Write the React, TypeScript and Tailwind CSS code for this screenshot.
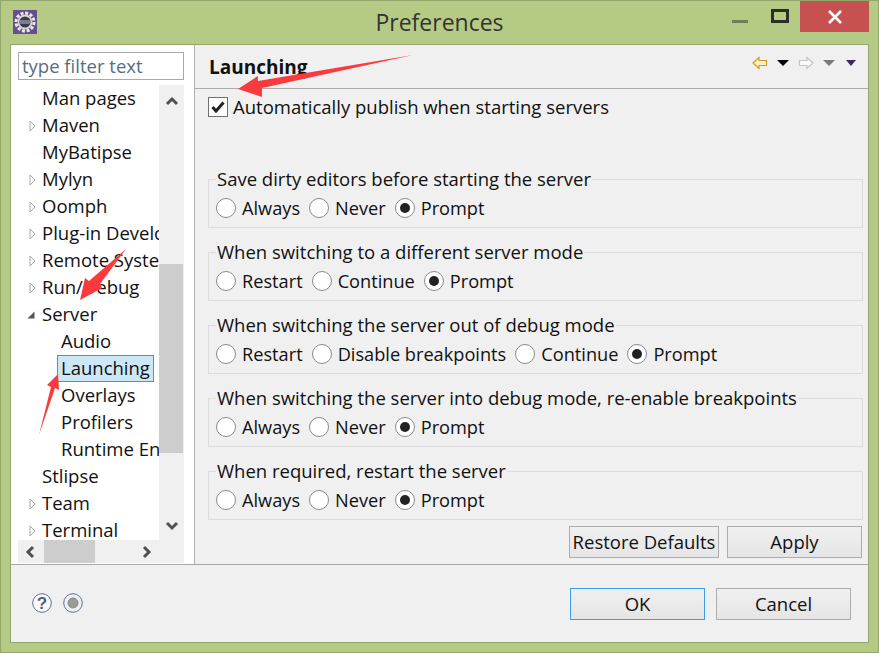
import React from "react";

const font = { fontFamily: '"Open Sans", "Noto Sans", sans-serif' };

type Row = { label: string; level: number; arrow?: "closed" | "open"; selected?: boolean };
const rows: Row[] = [
  { label: "Man pages", level: 1 },
  { label: "Maven", level: 1, arrow: "closed" },
  { label: "MyBatipse", level: 1 },
  { label: "Mylyn", level: 1, arrow: "closed" },
  { label: "Oomph", level: 1, arrow: "closed" },
  { label: "Plug-in Development", level: 1, arrow: "closed" },
  { label: "Remote Systems", level: 1, arrow: "closed" },
  { label: "Run/Debug", level: 1, arrow: "closed" },
  { label: "Server", level: 1, arrow: "open" },
  { label: "Audio", level: 2 },
  { label: "Launching", level: 2, selected: true },
  { label: "Overlays", level: 2 },
  { label: "Profilers", level: 2 },
  { label: "Runtime Environments", level: 2 },
  { label: "Stlipse", level: 1 },
  { label: "Team", level: 1, arrow: "closed" },
  { label: "Terminal", level: 1, arrow: "closed" },
];

const groups = [
  { title: "Save dirty editors before starting the server", options: ["Always", "Never", "Prompt"], mb: "mb-[24px]" },
  { title: "When switching to a different server mode", options: ["Restart", "Continue", "Prompt"], mb: "mb-[24px]" },
  { title: "When switching the server out of debug mode", options: ["Restart", "Disable breakpoints", "Continue", "Prompt"], mb: "mb-[24px]" },
  { title: "When switching the server into debug mode, re-enable breakpoints", options: ["Always", "Never", "Prompt"], mb: "mb-[24px]" },
  { title: "When required, restart the server", options: ["Always", "Never", "Prompt"], mb: "" },
];

function Arrow({ kind }: { kind?: "closed" | "open" }) {
  if (kind === "closed")
    return (
      <svg width="7" height="12" viewBox="0 0 7 12" className="absolute left-[-13px] top-[8px]">
        <path d="M1 1 L6 6 L1 11 Z" fill="#fff" stroke="#a8a8a8" strokeWidth="1" />
      </svg>
    );
  if (kind === "open")
    return (
      <svg width="8" height="8" viewBox="0 0 8 8" className="absolute left-[-15px] top-[10px]">
        <path d="M7.5 0.5 L7.5 7.5 L0.5 7.5 Z" fill="#555" />
      </svg>
    );
  return null;
}

function Chevron({ d }: { d: string }) {
  return (
    <svg width="14" height="14" viewBox="0 0 14 14">
      <path d={d} fill="none" stroke="#505050" strokeWidth="3" />
    </svg>
  );
}

function Radio({ checked, label }: { checked?: boolean; label: string }) {
  return (
    <div className="flex items-center">
      <span className="flex h-[20px] w-[20px] items-center justify-center rounded-full border border-[#8a8a8a] bg-white">
        {checked && <span className="h-[10px] w-[10px] rounded-full bg-[#222]" />}
      </span>
      <span className="ml-[6px] text-[18.2px]">{label}</span>
    </div>
  );
}

function Group({ title, options, mb }: { title: string; options: string[]; mb: string }) {
  return (
    <div className={`relative h-[49px] w-[655px] border border-[#dcdcdc] ${mb}`}>
      <span className="absolute left-[7px] top-[-13px] bg-[#f0f0f0] px-px leading-[24px] whitespace-nowrap">{title}</span>
      <div className="flex h-full items-center gap-[9px] pl-[7px] pt-[9px] leading-[24px]">
        {options.map((o) => (
          <Radio key={o} label={o} checked={o === "Prompt"} />
        ))}
      </div>
    </div>
  );
}

function Btn({ label, w, focus }: { label: string; w: string; focus?: boolean }) {
  return (
    <div
      className={`flex h-[32px] items-center justify-center border bg-gradient-to-b from-[#f0f0f0] to-[#e5e5e5] ${w} ${focus ? "border-[#3d9bf0]" : "border-[#acacac]"}`}
    >
      {label}
    </div>
  );
}

export default function App() {
  return (
    <div
      className="relative flex h-[653px] w-[879px] flex-col overflow-hidden border border-[#94a76a] bg-[#b5cb85] text-[18.5px] text-[#111]"
      style={font}
    >
      {/* Title bar */}
      <div className="relative flex h-[43px] shrink-0 items-center justify-center">
        <svg width="24" height="24" viewBox="0 0 24 24" className="absolute left-[12px] top-[9px]">
          <rect width="24" height="24" fill="#65508f" />
          <circle cx="12" cy="12" r="9" fill="none" stroke="#e9e9e9" strokeWidth="3" strokeDasharray="3 1.7" />
          <circle cx="12" cy="12" r="7.4" fill="#d8d8d8" />
          <circle cx="12" cy="12" r="5.6" fill="#3a3a4a" />
          <rect x="7" y="10" width="10" height="4" rx="1" fill="#7d7b92" />
        </svg>
        <span className="text-[23px] leading-none text-[#333]">Preferences</span>
        <div className="absolute left-[770px] top-[8px] h-[14px] w-[18px] border-[3px] border-[#2b2f26]" />
        <div className="absolute left-[731px] top-[19px] h-[3px] w-[16px] bg-[#6f7f55]" />
        <div className="absolute left-[799px] top-0 flex h-[31px] w-[69px] items-center justify-center bg-[#c75050]">
          <svg width="14" height="14" viewBox="0 0 14 14">
            <path d="M1 1 L13 13 M13 1 L1 13" stroke="#fff" strokeWidth="2.6" />
          </svg>
        </div>
      </div>

      {/* Client area */}
      <div className="mx-[9px] flex min-h-0 w-[859px] flex-col border border-[#94a76a] bg-[#f0f0f0]">
        <div className="flex h-[520px] shrink-0 border-b border-[#a8a8a8]">
          {/* Left panel */}
          <div className="flex w-[184px] shrink-0 flex-col border-r border-[#b0b0b0] bg-white pl-[7px] pt-[7px]">
            <div className="flex h-[28px] w-[166px] shrink-0 items-center border border-[#a9a9a9] pl-[3px] text-[#5a6d80]">
              type filter text
            </div>
            <div className="mt-[5px] flex h-[455px] w-[166px] shrink-0 overflow-hidden">
              <div className="h-full w-[141px] shrink-0 overflow-hidden">
                {rows.map((r) => (
                  <div key={r.label} className={`relative h-[27px] whitespace-nowrap leading-[25px] ${r.level === 1 ? "ml-[24px]" : "ml-[43px]"}`}>
                    <Arrow kind={r.arrow} />
                    {r.selected ? (
                      <span className="absolute left-[-4px] top-0 h-[27px] w-[97px] border border-[#3a9ad9] bg-[#cce8f7] pl-[3px] leading-[23px]">{r.label}</span>
                    ) : (
                      r.label
                    )}
                  </div>
                ))}
              </div>
              <div className="flex h-full w-[25px] shrink-0 flex-col items-center justify-between bg-[#f0f0f0]">
                <div className="relative h-full w-full">
                  <div className="flex h-[29px] items-center justify-center pt-[2px]">
                    <Chevron d="M2 10 L7 5 L12 10" />
                  </div>
                  <div className="mt-[150px] h-[189px] w-[24px] bg-[#cdcdcd]" />
                  <div className="mt-[58px] flex h-[29px] items-center justify-center">
                    <Chevron d="M2 4 L7 9 L12 4" />
                  </div>
                </div>
              </div>
            </div>
            <div className="flex h-[23px] w-[166px] shrink-0 items-center bg-[#f0f0f0]">
              <div className="flex w-[26px] justify-center">
                <Chevron d="M9 2 L4 7 L9 12" />
              </div>
              <div className="h-full w-[51px] bg-[#cdcdcd]" />
              <div className="ml-[38px] flex w-[26px] justify-center">
                <Chevron d="M5 2 L10 7 L5 12" />
              </div>
            </div>
          </div>

          {/* Right panel */}
          <div className="flex min-w-0 flex-1 flex-col">
            <div className="relative flex h-[44px] shrink-0 items-center border-b border-[#ababab] pl-[14px] pt-[1px] font-bold">
              <span className="text-[19px]">Launching</span>
              <div className="absolute left-[557px] top-[11px] flex items-center">
                <svg width="16" height="14" viewBox="0 0 16 14">
                  <path d="M1 7 L7 1.5 V4.5 H14.5 V9.5 H7 V12.5 Z" fill="#fdf2c4" stroke="#d29a22" strokeWidth="1.2" />
                </svg>
                <svg width="14" height="8" viewBox="0 0 14 8" className="ml-[8px]">
                  <path d="M1 1 H13 L7 7 Z" fill="#000" />
                </svg>
                <svg width="16" height="14" viewBox="0 0 16 14" className="ml-[8px]">
                  <path d="M15 7 L9 1.5 V4.5 H1.5 V9.5 H9 V12.5 Z" fill="#fafafa" stroke="#c4c4c4" strokeWidth="1.2" />
                </svg>
                <svg width="14" height="8" viewBox="0 0 14 8" className="ml-[8px]">
                  <path d="M1 1 H13 L7 7 Z" fill="#7a7a7a" />
                </svg>
                <svg width="12" height="8" viewBox="0 0 12 8" className="ml-[9px]">
                  <path d="M1 1 H11 L6 7 Z" fill="#3b2a5c" />
                </svg>
              </div>
            </div>
            <div className="flex flex-col pl-[13px]">
              <div className="mt-[8px] flex h-[20px] items-center">
                <span className="flex h-[20px] w-[20px] items-center justify-center border border-[#707070] bg-white">
                  <svg width="14" height="12" viewBox="0 0 14 12">
                    <path d="M1.5 6 L5 10 L12.5 1.5" fill="none" stroke="#222" strokeWidth="3" />
                  </svg>
                </span>
                <span className="ml-[5px] whitespace-nowrap">Automatically publish when starting servers</span>
              </div>
              <div className="mt-[62px] flex flex-col">
                {groups.map((g) => (
                  <Group key={g.title} {...g} />
                ))}
              </div>
              <div className="mt-[6px] flex w-[654px] justify-end gap-[8px]">
                <Btn label="Restore Defaults" w="w-[150px]" />
                <Btn label="Apply" w="w-[135px]" />
              </div>
            </div>
          </div>
        </div>

        {/* Footer */}
        <div className="flex h-[77px] items-center pb-[1px] pl-[21px]">
          <svg width="20" height="20" viewBox="0 0 20 20">
            <circle cx="10" cy="10" r="9.3" fill="#fafafa" stroke="#5a7199" strokeWidth="1" />
            <text x="10" y="16" textAnchor="middle" fontSize="17" fontWeight="700" fill="#4a5f8a" fontFamily="Liberation Sans">?</text>
          </svg>
          <svg width="20" height="20" viewBox="0 0 20 20" className="ml-[11px]">
            <circle cx="10" cy="10" r="9.3" fill="#f0f0f0" stroke="#5a7199" strokeWidth="1" />
            <circle cx="10" cy="10" r="5" fill="#9a9a9a" stroke="#8a8a8a" />
          </svg>
          <div className="ml-auto mr-[17px] mt-[2px] flex gap-[11px]">
            <Btn label="OK" w="w-[135px]" focus />
            <Btn label="Cancel" w="w-[135px]" />
          </div>
        </div>
      </div>

      {/* Annotation arrows */}
      <svg width="879" height="653" viewBox="0 0 879 653" className="pointer-events-none absolute left-[-1px] top-[-1px]">
        <g fill="#fb3a3d">
          <path d="M413 55 L262 88 L262 97 L238 89 L258 76 L258 81 Z" />
          <path d="M126 249 L100 284 L102 288 L80 300 L85 278 L89 281 Z" />
          <path d="M39 435 L51 387 L47 385 L58 374 L59 390 L55 388 Z" />
        </g>
      </svg>
    </div>
  );
}
